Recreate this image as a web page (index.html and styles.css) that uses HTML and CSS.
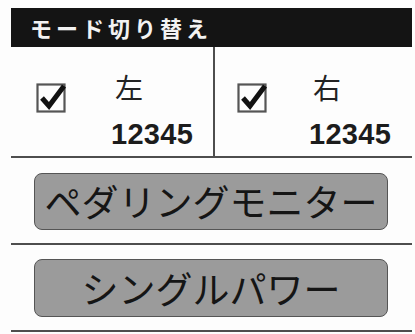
FILE: index.html
```html
<!DOCTYPE html>
<html lang="ja">
<head>
<meta charset="utf-8">
<link rel="stylesheet" href="styles.css">
</head>
<body>
<div class="panel">
  <div class="header">モード切り替え</div>
  <div class="sides">
    <div class="side side-left">
      <svg class="check" viewBox="0 0 32 32" width="32" height="32">
        <rect x="1.5" y="3.5" width="27" height="27" fill="none" stroke="#555" stroke-width="2.2"/>
        <path d="M6 17 L13 25 L28 5" fill="none" stroke="#111" stroke-width="5" stroke-linejoin="miter"/>
      </svg>
      <div class="label">
        <div class="name">左</div>
        <div class="num">12345</div>
      </div>
    </div>
    <div class="side side-right">
      <svg class="check" viewBox="0 0 32 32" width="32" height="32">
        <rect x="1.5" y="3.5" width="27" height="27" fill="none" stroke="#555" stroke-width="2.2"/>
        <path d="M6 17 L13 25 L28 5" fill="none" stroke="#111" stroke-width="5" stroke-linejoin="miter"/>
      </svg>
      <div class="label">
        <div class="name">右</div>
        <div class="num">12345</div>
      </div>
    </div>
  </div>
  <div class="btn-row first">
    <div class="btn">ペダリングモニター</div>
  </div>
  <div class="btn-row second">
    <div class="btn">シングルパワー</div>
  </div>
</div>
</body>
</html>
```
FILE: styles.css
```css
html, body {
  margin: 0;
  padding: 0;
  background: #fdfdfd;
}
body {
  width: 415px;
  height: 334px;
  overflow: hidden;
  font-family: "Noto Sans CJK JP", "Noto Sans", sans-serif;
  color: #1a1a1a;
}
.panel {
  margin: 8px 3px 0 11px;
}
.header {
  height: 39px;
  background: #141414;
  color: #f2f2f2;
  font-size: 22px;
  font-weight: bold;
  letter-spacing: 4px;
  line-height: 39px;
  padding-left: 19px;
}
.sides {
  display: flex;
  height: 109px;
  border-bottom: 2px solid #4e4e4e;
}
.side {
  display: flex;
  align-items: flex-start;
}
.side-left {
  border-right: 2px solid #4e4e4e;
  padding-left: 25px;
  width: 177px;
  gap: 43px;
}
.side-right {
  flex: 1;
  padding-left: 22px;
  gap: 40px;
}
.check {
  margin-top: 34px;
  flex: none;
}
.label {
  display: flex;
  flex-direction: column;
  padding-top: 23px;
}
.name {
  font-size: 28px;
  line-height: 34px;
  padding-left: 4px;
  color: #222;
}
.num {
  font-family: "Liberation Sans", Arial, sans-serif;
  font-weight: bold;
  font-size: 29px;
  line-height: 30px;
  margin-top: 15px;
  letter-spacing: 0.3px;
  color: #1c1c1c;
}
.btn-row {
  border-bottom: 2px solid #4e4e4e;
  padding: 15px 24px 13px 23px;
}
.btn-row.second {
  padding-top: 14px;
}
.btn {
  height: 55px;
  background: #9b9b9b;
  border: 1.5px solid #555;
  border-radius: 8px;
  display: flex;
  align-items: center;
  justify-content: center;
  font-size: 37px;
  line-height: 1;
  color: #151515;
  white-space: nowrap;
}
.btn-row.second .btn {
  height: 56px;
}
```
